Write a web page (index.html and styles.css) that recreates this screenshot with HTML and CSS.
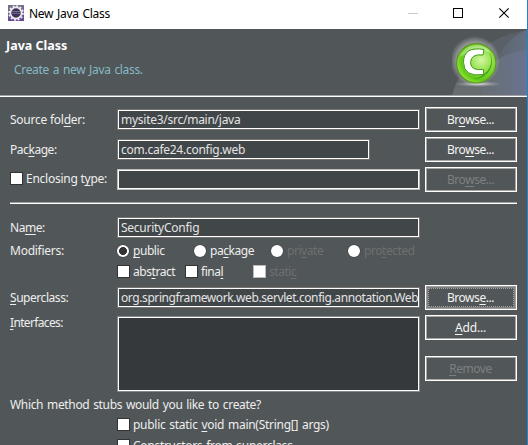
FILE: index.html
```
<!DOCTYPE html>
<html lang="en">
<head>
<meta charset="utf-8">
<title>New Java Class</title>
<link rel="stylesheet" href="styles.css">
</head>
<body>
<div class="window">
  <div class="titlebar">
    <svg class="app-icon" width="16" height="16" viewBox="0 0 16 16">
      <defs><linearGradient id="app" x1="0" y1="0" x2="0" y2="1"><stop offset="0" stop-color="#77708e"/><stop offset="1" stop-color="#6747a0"/></linearGradient></defs>
      <rect width="16" height="16" fill="url(#app)"/>
      <circle cx="8" cy="8" r="6.900" fill="none" stroke="#f1edf2" stroke-width="1.800" stroke-dasharray="1.900 1.713"/>
      <circle cx="8" cy="8" r="5.600" fill="#3d3357" stroke="#eeebea" stroke-width="1.700"/>
      <path d="M4 6.500h8M3.500 8.300h9" stroke="#756c91" stroke-width="1"/>
    </svg>
    <span class="caption">New Java Class</span>
    <svg class="controls" width="103" height="12" viewBox="0 0 103 12">
      <path d="M0 6.500h10" stroke="#ccc"/>
      <rect x="45.500" y="1.500" width="9" height="9" fill="none" stroke="#000"/>
      <path d="M91.300 1.300l9.400 9.400M100.700 1.300l-9.400 9.400" stroke="#000" stroke-width="1.100"/>
    </svg>
  </div>
  <div class="banner">
    <div class="heading">
      <h1>Java Class</h1>
      <p class="prose">Create a new Java class.</p>
    </div>
    <svg class="emblem" width="75" height="66" viewBox="0 0 75 66">
      <defs>
        <linearGradient id="sky" x1="0" x2="1"><stop offset="0" stop-color="#5a6168"/><stop offset="1" stop-color="#647083"/></linearGradient>
        <linearGradient id="haze" x1="0" x2="1"><stop offset="0" stop-color="#686e72"/><stop offset="1" stop-color="#69738f"/></linearGradient>
        <radialGradient id="ball" cx=".62" cy=".42" r=".62"><stop offset="0" stop-color="#d4f7a6"/><stop offset=".4" stop-color="#9be355"/><stop offset=".8" stop-color="#61c817"/><stop offset="1" stop-color="#8be335"/></radialGradient>
        <radialGradient id="glow"><stop offset=".72" stop-color="#fff" stop-opacity=".4"/><stop offset="1" stop-color="#fff" stop-opacity="0"/></radialGradient>
        <radialGradient id="shade"><stop offset="0" stop-color="#e2e4df"/><stop offset="1" stop-color="#a0a4a2" stop-opacity="0"/></radialGradient>
      </defs>
      <path d="M0 66C9 30 36 7 75 1V66z" fill="#596067"/>
      <path d="M38 66C37 34 53 9 75 1V66z" fill="url(#sky)"/>
      <path d="M0 66C3 58 5 53 8 49L40 39V66z" fill="#666c70"/>
      <path d="M30 66C30 40 45 24 75 21V66z" fill="url(#haze)"/>
      <circle cx="23" cy="32" r="25" fill="url(#glow)"/>
      <ellipse cx="26" cy="55" rx="24" ry="3" fill="url(#shade)"/>
      <circle cx="24.300" cy="34.300" r="19.700" fill="url(#ball)" stroke="#63902d" stroke-width="1.200"/>
      <path d="M36 21C44 33 37 47 21 50C36 51 46 34 36 21" fill="#3fa50e"/>
      <path d="M8 28C13 13 32 13 39 24C28 19 18 22 8 28" fill="#fff" opacity=".35"/>
      <path d="M32 20.500Q11.500 17 11.500 33.500Q12 48.500 31.500 45.500V40.500Q18.500 42 18.500 33.500Q19 24.500 31 26Z" fill="#fff" stroke="#459a20" stroke-width="1"/>
    </svg>
  </div>
  <div class="rule"></div>
  <main class="form">
    <div class="row"><label class="label">Source fol<u>d</u>er:</label><div class="field"><span>mysite3/src/main/java</span></div><button>Br<u>o</u>wse...</button></div>
    <div class="row"><label class="label snug">Pac<u>k</u>age:</label><div class="field short"><span>com.cafe24.config.web</span></div><button>Bro<u>w</u>se...</button></div>
    <div class="row"><label class="label enclosing"><i class="check"></i><span>Enclosing t<u>y</u>pe:</span></label><div class="field pale"></div><button class="disabled">Bro<u>w</u>se...</button></div>
    <div class="separator"></div>
    <div class="row name"><label class="label snug">Na<u>m</u>e:</label><div class="field"><span>SecurityConfig</span></div></div>
    <div class="row modifiers"><span class="label">Modifiers:</span>
      <div class="radios snug">
        <label><i class="radio on"></i><span><u>p</u>ublic</span></label>
        <label><i class="radio"></i><span>pa<u>c</u>kage</span></label>
        <label class="off"><i class="radio"></i><span>pri<u>v</u>ate</span></label>
        <label class="off"><i class="radio"></i><span>pro<u>t</u>ected</span></label>
      </div></div>
    <div class="row checks"><span class="label"></span>
      <div class="boxes snug">
        <label><i class="check"></i><span>abs<u>t</u>ract</span></label>
        <label><i class="check"></i><span>fina<u>l</u></span></label>
        <label class="off"><i class="check"></i><span>stati<u>c</u></span></label>
      </div></div>
    <div class="row"><label class="label snug"><u>S</u>uperclass:</label><div class="field long"><span>org.springframework.web.servlet.config.annotation.Web</span></div><button class="focus">Brows<u>e</u>...</button></div>
    <div class="row interfaces"><label class="label tight"><u>I</u>nterfaces:</label><div class="list"></div>
      <div class="stack"><button class="add"><u>A</u>dd...</button><button class="disabled"><u>R</u>emove</button></div></div>
    <p class="question prose">Which method stubs would you like to create?</p>
    <div class="stubs prose">
      <label><i class="check"></i><span>public static <u>v</u>oid main(String[] args)</span></label>
      <label><i class="check"></i><span>Constructors from superclass</span></label>
    </div>
  </main>
</div>
</body>
</html>
```
FILE: styles.css
```
* { box-sizing: border-box; }
body { margin: 0; overflow: hidden; font: 12px/16px "Noto Sans", sans-serif; color: #eee; }
.window { width: 528px; height: 445px; overflow: hidden; background: #515658; border-right: 1px solid #1c83cf; }
span { white-space: pre; }
u { text-decoration: underline; text-decoration-thickness: 1px; text-underline-offset: 2px; text-decoration-skip-ink: none; }
.titlebar { height: 29px; background: #fff; color: #000; display: flex; align-items: center; padding: 0 16px 3px 8px; }
.caption { margin-left: 5px; padding-top: 2px; letter-spacing: -.3px; word-spacing: 1px; }
.controls { margin-left: auto; }
.banner { height: 66px; display: flex; justify-content: space-between; padding-left: 6px; }
.heading { padding-top: 9px; }
h1 { font-size: 12.500px; line-height: 16px; font-weight: 700; margin: 0; color: #fff; }
p { margin: 0; }
.prose { letter-spacing: -.33px; word-spacing: 1px; }
.heading p { padding: 8px 0 0 8px; color: #85b9c6; }
.rule { height: 2px; background: #fff; border-top: 1px solid #a0a0a0; }
.form { padding: 10px 10px 0; }
.row { display: flex; height: 25px; margin-bottom: 5px; align-items: center; }
.label { width: 107px; flex: none; display: flex; align-items: center; white-space: pre; letter-spacing: -.25px; }
.snug, .label.snug { letter-spacing: -.45px; }
.label.tight { letter-spacing: -.65px; }
.enclosing { align-self: flex-start; padding-top: 4px; }
.enclosing .check { margin-top: -2px; }
.field { width: 303px; height: 21px; border: 1px solid #74736f; box-shadow: inset 0 0 0 1px #fff; background: #414649; padding: 2px 2px 0 3px; line-height: 16px; color: #e4e4e4; letter-spacing: -.26px; }
.field span { display: block; }
.field.short { width: 253px; }
.field.pale { border-color: #bdbeb9; }
.field.long { letter-spacing: -.41px; }
button { width: 92px; height: 25px; margin: 0 0 0 auto; padding: 0 1px 0 0; font: inherit; letter-spacing: -.45px; color: #f4f4f4; background: #515658; border: 1px solid #fff; box-shadow: inset 0 0 0 1px #a6a6a4; text-align: center; flex: none; }
button.disabled { color: #7d8081; }
button.add { letter-spacing: -.15px; }
button.focus { outline: 1px dotted #a3a3a3; outline-offset: -4px; box-shadow: inset 0 0 0 1px #a09fa0, inset 0 0 0 2px #807f80; }
.check { width: 13px; height: 13px; border: 1px solid #333; background: #fff; flex: none; margin-right: 3px; }
.off .check { border-color: #bbb; }
.radio { width: 12px; height: 12px; border-radius: 50%; background: #fff; flex: none; margin-right: 4px; box-shadow: 0 0 0 .5px #393c3e; }
.radio.on { background: radial-gradient(circle, #333 3.700px, #fff 4.200px); }
label { display: flex; align-items: center; }
.off { color: #6d7071; }
.separator { height: 2px; margin-top: 10px; border-top: 1px solid #a0a0a0; background: #fff; }
.name { height: 21px; margin: 13px 0 5px; }
.modifiers { height: 16px; margin-bottom: 6px; }
.radios { display: grid; grid-template-columns: 77px 77px 77px 80px; padding-left: 0; }
.checks { height: 13px; margin-bottom: 7px; }
.boxes { display: grid; grid-template-columns: 68px 68px 80px; }
.interfaces { height: 77px; margin: 0 0 5px; align-items: flex-start; }
.list { margin-top: 1px; width: 303px; height: 76px; background: #36393b; border: 1px solid #85888a; box-shadow: inset 0 0 0 1px #fff; }
.stack { margin-left: auto; display: grid; gap: 16px; }
.question { height: 16px; }
.stubs { padding: 5px 0 0 107px; display: grid; gap: 8px; letter-spacing: -.28px; }
.stubs label { height: 13px; }
```
